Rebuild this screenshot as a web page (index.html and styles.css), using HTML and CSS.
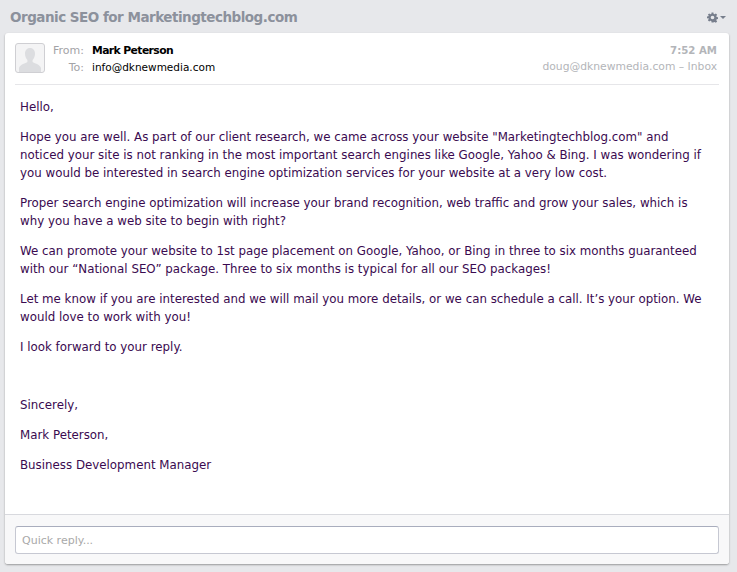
FILE: index.html
```html
<!DOCTYPE html>
<html lang="en">
<head>
  <meta charset="UTF-8">
  <title>Organic SEO for Marketingtechblog.com</title>
  <link rel="stylesheet" href="styles.css">
</head>
<body>

  <div class="thread-head">
    <h1 class="thread-title">Organic SEO for Marketingtechblog.com</h1>
    <div class="gear-menu">
      <svg class="gear-icon" width="11" height="11" viewBox="0 0 24 24">
        <path fill-rule="evenodd" d="M10 1h4l.6 3.2 2 .8L19.3 3.2l2.8 2.8-1.8 2.7.8 2 3.2.6v4l-3.2.6-.8 2 1.8 2.7-2.8 2.8-2.7-1.8-2 .8L14 23h-4l-.6-3.2-2-.8-2.7 1.8-2.8-2.8 1.8-2.7-.8-2L0 14v-4l2.9-.6.8-2L1.900 6l2.800-2.800L7.400 5l2-.8zM12 8a4 4 0 1 0 0 8 4 4 0 0 0 0-8z"/>
      </svg>
      <span class="caret"></span>
    </div>
  </div>

  <div class="message-card">
    <div class="message-head">
      <div class="avatar">
        <svg width="28" height="28" viewBox="0 0 28 28">
          <path d="M14 4c3.300 0 5 2.500 5 5.800 0 2.600-1 4.800-2.400 6.200v2c1.500 1.200 7.400 2.300 8.400 6v4H3v-4c1-3.700 6.900-4.800 8.400-6v-2C10 14.600 9 12.400 9 9.800 9 6.500 10.700 4 14 4z"/>
        </svg>
      </div>
      <div class="people">
        <div class="people-row">
          <span class="people-label">From:</span>
          <span class="sender">Mark Peterson</span>
        </div>
        <div class="people-row">
          <span class="people-label">To:</span>
          <span class="recipient">info@dknewmedia.com</span>
        </div>
      </div>
      <div class="message-meta">
        <div class="time">7:52 AM</div>
        <div>doug@dknewmedia.com – Inbox</div>
      </div>
    </div>

    <div class="message-body">
      <p>Hello,</p>
      <p>Hope you are well. As part of our client research, we came across your website "Marketingtechblog.com" and<br>
      noticed your site is not ranking in the most important search engines like Google, Yahoo &amp; Bing. I was wondering if<br>
      you would be interested in search engine optimization services for your website at a very low cost.</p>
      <p>Proper search engine optimization will increase your brand recognition, web traffic and grow your sales, which is<br>
      why you have a web site to begin with right?</p>
      <p>We can promote your website to 1st page placement on Google, Yahoo, or Bing in three to six months guaranteed<br>
      with our “National SEO” package. Three to six months is typical for all our SEO packages!</p>
      <p>Let me know if you are interested and we will mail you more details, or we can schedule a call. It’s your option. We<br>
      would love to work with you!</p>
      <p>I look forward to your reply.</p>
      <p class="sign-off">Sincerely,</p>
      <p>Mark Peterson,</p>
      <p>Business Development Manager</p>
    </div>

    <div class="reply-bar">
      <input class="reply-input" type="text" placeholder="Quick reply...">
    </div>
  </div>

</body>
</html>
```

FILE: styles.css
```css
* {
  box-sizing: border-box;
}

html, body {
  height: 100%;
}

body {
  margin: 0;
  padding: 0 8px 8px 5px;
  display: flex;
  flex-direction: column;
  background-color: #e7e8eb;
  font-family: "DejaVu Sans", sans-serif;
  font-size: 11.84px;
  color: #000;
}

.thread-head {
  height: 33px;
  flex: none;
  display: flex;
  align-items: center;
  justify-content: space-between;
  padding: 0 3px 0 5px;
}

.thread-title {
  margin: 0;
  font-size: 13.5px;
  font-weight: bold;
  letter-spacing: -0.5px;
  color: #8c919c;
}

.gear-menu {
  display: flex;
  align-items: center;
  gap: 2px;
  margin-top: 2px;
}

.gear-icon {
  fill: #777e8c;
}

.caret {
  width: 0;
  height: 0;
  border-left: 3px solid transparent;
  border-right: 3px solid transparent;
  border-top: 3px solid #777e8c;
}

.message-card {
  flex: 1;
  display: flex;
  flex-direction: column;
  background-color: #fff;
  border-radius: 3px;
  box-shadow: 0 1px 2px rgba(0, 0, 0, 0.35);
}

.message-head {
  height: 52px;
  margin: 0 10px;
  padding-top: 10px;
  display: flex;
  border-bottom: 1px solid #e6e6e9;
}

.avatar {
  width: 30px;
  height: 30px;
  flex: none;
  display: flex;
  align-items: flex-end;
  justify-content: center;
  overflow: hidden;
  background-color: #f4f4f5;
  border: 1px solid #cfcfd3;
  border-radius: 3px;
}

.avatar svg {
  fill: #dcdde0;
}

.people {
  margin-left: 8px;
  font-size: 11px;
  line-height: 16px;
}

.people-row {
  display: flex;
  align-items: baseline;
}

.people-label {
  width: 31px;
  margin-right: 8px;
  text-align: right;
  color: #a3a3a6;
}

.sender {
  font-size: 10.8px;
  font-weight: bold;
  letter-spacing: -0.6px;
}

.recipient {
  font-size: 10.5px;
}

.message-meta {
  margin-left: auto;
  padding-right: 2px;
  text-align: right;
  font-size: 10.75px;
  line-height: 16px;
  color: #b3b5b9;
}

.time {
  font-size: 10.2px;
  font-weight: bold;
}

.message-body {
  flex: 1;
  padding: 13px 15px 0;
  line-height: 18px;
  color: #3a0a50;
}

.message-body p {
  margin: 0 0 12px;
  white-space: nowrap;
}

.message-body .sign-off {
  margin-top: 40px;
}

.reply-bar {
  height: 50px;
  flex: none;
  padding: 11px 10px 0;
  background-color: #f8f8f9;
  border-top: 1px solid #d8d9de;
  border-radius: 0 0 3px 3px;
}

.reply-input {
  display: block;
  width: 100%;
  height: 28px;
  padding: 0 6px;
  background-color: #fff;
  border: 1px solid #c6c8d2;
  border-top-color: #a9adbd;
  border-radius: 3px;
  font-family: "DejaVu Sans", sans-serif;
  font-size: 11px;
}

.reply-input::placeholder {
  color: #a9a9a9;
}
```
